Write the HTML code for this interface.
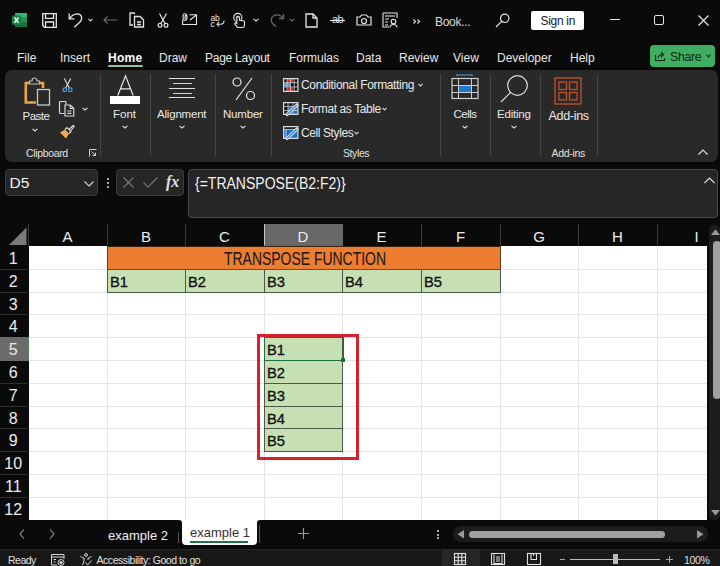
<!DOCTYPE html>
<html><head><meta charset="utf-8">
<style>
*{margin:0;padding:0;box-sizing:border-box}
html,body{width:720px;height:566px;overflow:hidden;background:#0a0a0a;font-family:"Liberation Sans",sans-serif;color:#fff}
.a{position:absolute}
.t{position:absolute;white-space:nowrap;line-height:1}
svg{position:absolute;overflow:visible}
</style></head><body>

<!-- excel logo -->
<svg style="left:12px;top:13px" width="15" height="14" viewBox="0 0 15 14">
  <rect x="3" y="0" width="12" height="14" rx="1" fill="#1d8f54"/>
  <rect x="3" y="0" width="12" height="4.5" rx="1" fill="#2fb874"/>
  <rect x="3" y="9.5" width="12" height="4.5" rx="1" fill="#17703f"/>
  <rect x="0" y="2.6" width="9" height="9.1" rx="0.8" fill="#138048"/>
  <path d="M2.5 4.5 L6.5 9.8 M6.5 4.5 L2.5 9.8" stroke="#f4fff8" stroke-width="1.5"/>
</svg>
<!-- save -->
<svg style="left:41.5px;top:13px" width="15" height="15" viewBox="0 0 15 15" fill="none" stroke="#e6e6e6" stroke-width="1.3">
  <path d="M0.7 0.7 H14.3 V14.3 H2.5 L0.7 12.5 Z"/><path d="M3.5 0.7 V5.3 H11.5 V0.7"/><path d="M3.5 14.3 V9 H11.5 V14.3"/>
</svg>
<!-- undo -->
<svg style="left:68px;top:13px" width="15" height="15" viewBox="0 0 15 15" fill="none" stroke="#e6e6e6" stroke-width="1.3">
  <path d="M1.2 0.5 V5.8 H6.5"/><path d="M1.5 5.5 Q5 1 9 0.8 Q13.5 0.8 13.7 5 Q13.7 7.5 11.5 9.5 L6.2 14.3"/>
</svg>
<svg style="left:88px;top:18px" width="5" height="4" viewBox="0 0 5 4" fill="none" stroke="#ddd" stroke-width="1.1"><path d="M0.5 0.8 L2.5 3 L4.5 0.8"/></svg>
<!-- back arrow gray -->
<svg style="left:103px;top:16px" width="14" height="8" viewBox="0 0 14 8" fill="none" stroke="#6a6a6a" stroke-width="1.2"><path d="M14 4 H1 M4.5 0.5 L1 4 L4.5 7.5"/></svg>
<!-- copy doc -->
<svg style="left:129px;top:12px" width="16" height="16" viewBox="0 0 16 16" fill="none" stroke="#e6e6e6" stroke-width="1.3">
  <path d="M6 2 L5 1 H1 V13 H4"/><path d="M5.5 4.5 H11 L14.5 8 V15 H5.5 Z"/><path d="M8 10 H12 M8 12.5 H12"/>
</svg>
<!-- scissors -->
<svg style="left:157px;top:13px" width="12" height="15" viewBox="0 0 12 15" fill="none" stroke="#e6e6e6" stroke-width="1.2">
  <path d="M2.5 0.5 L8 10.5 M9.5 0.5 L4 10.5"/><circle cx="3" cy="12.3" r="1.9"/><circle cx="9" cy="12.3" r="1.9"/>
</svg>
<!-- attach email -->
<svg style="left:182px;top:13px" width="16" height="13" viewBox="0 0 16 13" fill="none" stroke="#e6e6e6" stroke-width="1.1">
  <path d="M7.5 1.8 H14.5 V11.5 H0.6 V7"/><path d="M8 7 L14 2.3"/><path d="M4.7 6 V2.5 A1.8 1.8 0 0 0 1.1 2.5 V5.5 A1.9 1.9 0 0 0 4.9 5.5 V3.3 A0.9 0.9 0 0 0 3.1 3.3 V6"/>
</svg>
<!-- spell abc -->
<div class="t" style="left:210.5px;top:13.5px;font-size:8.5px;color:#e6e6e6;letter-spacing:-0.2px">ab</div>
<div class="t" style="left:210.5px;top:19.5px;font-size:8.5px;color:#e6e6e6">c</div>
<svg style="left:216px;top:19.5px" width="9" height="7" viewBox="0 0 9 7" fill="none" stroke="#e6e6e6" stroke-width="1.1"><path d="M8 0.5 Q8 4.3 4.5 4.3 H1 M3 2 L1 4.3 L3 6.5"/></svg>
<!-- touch -->
<svg style="left:233px;top:13px" width="13" height="16" viewBox="0 0 13 16" fill="none" stroke="#e6e6e6" stroke-width="1.1">
  <circle cx="4.8" cy="4.5" r="4.1"/><circle cx="4.8" cy="4.5" r="2.1" fill="#888" stroke="none"/>
  <path d="M3.8 5 V10.5 L2.5 9.8 Q1.5 10 2 11.2 L4.5 14.5 H10 Q11.5 14 11.5 12 V9 Q11.5 8 10 7.8 L6.5 7.2 V5 A1.35 1.35 0 0 0 3.8 5 Z" fill="#0a0a0a"/>
</svg>
<svg style="left:253px;top:18px" width="6" height="4" viewBox="0 0 6 4" fill="none" stroke="#ddd" stroke-width="1.1"><path d="M0.5 0.8 L3 3 L5.5 0.8"/></svg>
<!-- redo gray -->
<svg style="left:269px;top:13px" width="16" height="14" viewBox="0 0 16 14" fill="none" stroke="#6a6a6a" stroke-width="1.3">
  <path d="M14.5 1 V5.5 H10"/><path d="M14.2 5.3 C12 2 8 1 5 2.5 C1.5 4.5 1.5 8.5 4 11 L7 13.5"/>
</svg>
<svg style="left:289px;top:18px" width="6" height="4" viewBox="0 0 6 4" fill="none" stroke="#6a6a6a" stroke-width="1.1"><path d="M0.5 0.8 L3 3 L5.5 0.8"/></svg>
<!-- new doc -->
<svg style="left:305px;top:13px" width="13" height="15" viewBox="0 0 13 15" fill="none" stroke="#e6e6e6" stroke-width="1.3">
  <path d="M1 1 H8 L12 5 V14 H1 Z"/><path d="M8 1 V5 H12"/>
</svg>
<!-- strikethrough ab -->
<div class="t" style="left:332px;top:14px;font-size:11px;color:#e6e6e6;letter-spacing:-0.5px">ab</div>
<div class="a" style="left:330px;top:20px;width:15px;height:1.3px;background:#e6e6e6"></div>
<!-- camera -->
<svg style="left:356px;top:14px" width="16" height="12" viewBox="0 0 16 12" fill="none" stroke="#e6e6e6" stroke-width="1.2">
  <path d="M1 3 H4 L5.5 1 H10.5 L12 3 H15 V11 H1 Z"/><circle cx="8" cy="7" r="2.5"/>
</svg>
<!-- form -->
<svg style="left:382px;top:12px" width="17" height="16" viewBox="0 0 17 16" fill="none" stroke="#e6e6e6" stroke-width="1.1">
  <path d="M1 1 H15 V6"/><path d="M1 1 V15 H7"/><path d="M3 4 H13"/><path d="M3 7 H7 M3 10 H6 M3 13 H6"/><circle cx="11.5" cy="9.5" r="2.3"/><path d="M8 15.5 Q8 12.5 11.5 12.5 Q15 12.5 15 15.5"/>
</svg>
<svg style="left:413px;top:19px" width="8" height="5" viewBox="0 0 8 5" fill="none" stroke="#e0e0e0" stroke-width="1.2"><path d="M0.5 0.5 L2.5 2.5 L0.5 4.5 M4.5 0.5 L6.5 2.5 L4.5 4.5"/></svg>
<div class="t" style="left:435px;top:15.5px;font-size:12px;color:#dcdcdc;letter-spacing:-0.3px">Book...</div>
<!-- search -->
<svg style="left:495px;top:13px" width="15" height="15" viewBox="0 0 15 15" fill="none" stroke="#e6e6e6" stroke-width="1.2">
  <circle cx="9.7" cy="5.3" r="4.2"/><path d="M6.7 8.3 L1 14"/>
</svg>
<div class="a" style="left:531px;top:11px;width:53px;height:19px;background:#fff;border-radius:2px"></div>
<div class="t" style="left:540.5px;top:15px;font-size:12px;color:#1a1a1a;letter-spacing:-0.3px">Sign in</div>
<!-- window controls -->
<div class="a" style="left:610px;top:19px;width:10px;height:1.2px;background:#e6e6e6"></div>
<div class="a" style="left:654px;top:15px;width:10px;height:10px;border:1.2px solid #e6e6e6;border-radius:2px"></div>
<svg style="left:698px;top:15px" width="11" height="11" viewBox="0 0 11 11" fill="none" stroke="#e6e6e6" stroke-width="1.2"><path d="M0.5 0.5 L10.5 10.5 M10.5 0.5 L0.5 10.5"/></svg>

<div class="t" style="left:17px;top:52px;font-size:12px;color:#e8e8e8">File</div>
<div class="t" style="left:60px;top:52px;font-size:12px;color:#e8e8e8">Insert</div>
<div class="t" style="left:108px;top:52px;font-size:12px;color:#fff;font-weight:bold;letter-spacing:0.3px">Home</div>
<div class="a" style="left:108px;top:64.5px;width:35px;height:2px;background:#8fc3a4;border-radius:1px"></div>
<div class="t" style="left:159px;top:52px;font-size:12px;color:#e8e8e8">Draw</div>
<div class="t" style="left:205px;top:52px;font-size:12px;color:#e8e8e8;letter-spacing:-0.25px">Page Layout</div>
<div class="t" style="left:289px;top:52px;font-size:12px;color:#e8e8e8">Formulas</div>
<div class="t" style="left:356px;top:52px;font-size:12px;color:#e8e8e8">Data</div>
<div class="t" style="left:399px;top:52px;font-size:12px;color:#e8e8e8">Review</div>
<div class="t" style="left:453px;top:52px;font-size:12px;color:#e8e8e8">View</div>
<div class="t" style="left:497px;top:52px;font-size:12px;color:#e8e8e8">Developer</div>
<div class="t" style="left:570px;top:52px;font-size:12px;color:#e8e8e8">Help</div>
<div class="a" style="left:650px;top:45px;width:65px;height:22px;background:#3fae62;border-radius:4px"></div>
<svg style="left:655px;top:51px" width="11" height="10" viewBox="0 0 11 10" fill="none" stroke="#0f2a18" stroke-width="1.1">
  <path d="M0.5 4 V9.5 H9.5 V7"/><path d="M3 7 Q3.5 3.5 8 3.5 M6 1 L8.5 3.5 L6 6"/>
</svg>
<div class="t" style="left:670px;top:50.8px;font-size:12.3px;color:#0f2a18;letter-spacing:-0.3px">Share</div>
<svg style="left:706px;top:54px" width="5" height="3.5" viewBox="0 0 5 3.5" fill="none" stroke="#0f2a18" stroke-width="1.1"><path d="M0.5 0.5 L2.5 2.8 L4.5 0.5"/></svg>

<div class="a" style="left:5px;top:70px;width:713px;height:92px;background:#292929;border-radius:7px"></div>
<!-- separators -->
<div class="a" style="left:100px;top:74px;width:1px;height:82px;background:#454545"></div>
<div class="a" style="left:150px;top:74px;width:1px;height:82px;background:#454545"></div>
<div class="a" style="left:215px;top:74px;width:1px;height:82px;background:#454545"></div>
<div class="a" style="left:271px;top:74px;width:1px;height:82px;background:#454545"></div>
<div class="a" style="left:440px;top:74px;width:1px;height:82px;background:#454545"></div>
<div class="a" style="left:490px;top:74px;width:1px;height:82px;background:#454545"></div>
<div class="a" style="left:540px;top:74px;width:1px;height:82px;background:#454545"></div>
<div class="a" style="left:597px;top:74px;width:1px;height:82px;background:#454545"></div>

<!-- Clipboard group -->
<svg style="left:23px;top:76px" width="29" height="31" viewBox="0 0 29 31" fill="none">
  <path d="M6 7 H2.8 V26.5 H13" stroke="#eaa53c" stroke-width="2.6"/>
  <path d="M15 7 H20 V12" stroke="#eaa53c" stroke-width="2.6"/>
  <path d="M6.5 8 V5 H9 Q9 2 11.5 2 Q14 2 14 5 H16.5 V8 Z" stroke="#bdbdbd" stroke-width="1.2" fill="#292929"/>
  <rect x="14.5" y="13.5" width="12" height="15.5" stroke="#c8c8c8" stroke-width="1.3" fill="#292929"/>
</svg>
<div class="t" style="left:22.5px;top:111px;font-size:11.5px;color:#e8e8e8;letter-spacing:-0.5px">Paste</div>
<svg style="left:32px;top:128px" width="6" height="4" viewBox="0 0 6 4" fill="none" stroke="#ddd" stroke-width="1.1"><path d="M0.5 0.8 L3 3 L5.5 0.8"/></svg>
<!-- scissors blue -->
<svg style="left:61.5px;top:77.5px" width="11" height="14.5" viewBox="0 0 12 16" fill="none" stroke-width="1.3">
  <path d="M2.5 0.5 L8 11 M9.5 0.5 L4 11" stroke="#d8d8d8"/><circle cx="3" cy="13" r="2" stroke="#4a9ee0" stroke-width="1.4"/><circle cx="9" cy="13" r="2" stroke="#4a9ee0" stroke-width="1.4"/>
</svg>
<!-- copy -->
<svg style="left:58px;top:100px" width="17" height="17" viewBox="0 0 17 17" fill="none" stroke="#d8d8d8" stroke-width="1.2">
  <path d="M8 4.5 V2.5 Q8 1.5 7 1.5 H2.5 Q1.5 1.5 1.5 2.5 V12.5 Q1.5 13.5 2.5 13.5 H6.5"/><path d="M7 5 H12.3 L15.8 8.5 V16 H7 Z"/><path d="M12.3 5 V8.5 H15.8"/><path d="M9.3 11 H13.5 M9.3 13.3 H13.5"/>
</svg>
<svg style="left:82px;top:107px" width="6" height="4" viewBox="0 0 6 4" fill="none" stroke="#ddd" stroke-width="1.1"><path d="M0.5 0.8 L3 3 L5.5 0.8"/></svg>
<!-- format painter -->
<svg style="left:59px;top:124px" width="16" height="15" viewBox="0 0 16 15" fill="none">
  <path d="M1 8.5 L7 14.5 L10 9.5 L6 5.5 Z" fill="#e8b04a"/>
  <path d="M6 5.5 L8 3.5 L12 7.5 L10 9.5" stroke="#d8d8d8" stroke-width="1.2"/>
  <path d="M10 5.5 L14 1.5 A0.9 0.9 0 0 1 15 2.5 L12 6.5" stroke="#d8d8d8" stroke-width="1.2"/>
</svg>
<div class="t" style="left:26px;top:148px;font-size:10.5px;color:#e0e0e0;letter-spacing:-0.35px">Clipboard</div>
<svg style="left:89px;top:149px" width="8" height="8" viewBox="0 0 8 8" fill="none" stroke="#cfcfcf" stroke-width="1"><path d="M0.5 7.5 V0.5 H7.5 M2.5 2.5 L6.5 6.5 M6.5 3.5 V6.5 H3.5"/></svg>

<!-- Font group -->
<svg style="left:116.5px;top:75px" width="17" height="21" viewBox="0 0 17 21" fill="none" stroke="#e8e8e8" stroke-width="1.2"><path d="M0.8 20.5 L8.5 0.8 L16.2 20.5 M3.5 13.8 H13.5"/></svg>
<div class="a" style="left:110px;top:96px;width:30px;height:8px;background:#fff"></div>
<div class="t" style="left:113px;top:109px;font-size:11.5px;color:#e8e8e8">Font</div>
<svg style="left:122px;top:125px" width="6" height="4" viewBox="0 0 6 4" fill="none" stroke="#ddd" stroke-width="1.1"><path d="M0.5 0.8 L3 3 L5.5 0.8"/></svg>

<!-- Alignment -->
<div class="a" style="left:169px;top:78px;width:26px;height:1.3px;background:#e0e0e0"></div>
<div class="a" style="left:172.5px;top:83px;width:19px;height:1.3px;background:#d0d0d0"></div>
<div class="a" style="left:169px;top:88px;width:26px;height:1.3px;background:#e0e0e0"></div>
<div class="a" style="left:172.5px;top:93px;width:19px;height:1.3px;background:#d0d0d0"></div>
<div class="a" style="left:169px;top:97px;width:26px;height:1.3px;background:#e0e0e0"></div>
<div class="t" style="left:157px;top:109px;font-size:11.5px;color:#e8e8e8;letter-spacing:-0.2px">Alignment</div>
<svg style="left:179px;top:125px" width="6" height="4" viewBox="0 0 6 4" fill="none" stroke="#ddd" stroke-width="1.1"><path d="M0.5 0.8 L3 3 L5.5 0.8"/></svg>

<!-- Number -->
<svg style="left:232px;top:77px" width="24" height="24" viewBox="0 0 24 24" fill="none" stroke="#e8e8e8" stroke-width="1.2"><circle cx="5" cy="5" r="4"/><circle cx="18.5" cy="18.5" r="4"/><path d="M20 1 L4 23"/></svg>
<div class="t" style="left:223px;top:109px;font-size:11.5px;color:#e8e8e8;letter-spacing:-0.2px">Number</div>
<svg style="left:240px;top:125px" width="6" height="4" viewBox="0 0 6 4" fill="none" stroke="#ddd" stroke-width="1.1"><path d="M0.5 0.8 L3 3 L5.5 0.8"/></svg>

<!-- Styles group -->
<svg style="left:283px;top:77.5px" width="15.5" height="14" viewBox="0 0 15.5 14">
  <rect x="0.6" y="0.6" width="14.3" height="12.8" fill="#151515"/>
  <rect x="4" y="1" width="6" height="3.2" fill="#e52626"/>
  <rect x="1" y="5.2" width="6" height="3.4" fill="#5a9ee6"/>
  <rect x="4.5" y="9.6" width="5.5" height="3.4" fill="#e52626"/>
  <path d="M0.6 0.6 H14.9 V13.4 H0.6 Z" fill="none" stroke="#dcdcdc" stroke-width="1.2"/>
  <path d="M4 0.6 V13.4 M7.5 0.6 V13.4 M11.2 0.6 V13.4 M0.6 4.6 H14.9 M0.6 9 H14.9" stroke="#cfcfcf" stroke-width="0.8"/>
</svg>
<div class="t" style="left:301px;top:79px;font-size:12px;color:#e8e8e8;letter-spacing:-0.35px">Conditional Formatting</div>
<svg style="left:418px;top:83px" width="5" height="4" viewBox="0 0 5 4" fill="none" stroke="#ddd" stroke-width="1.1"><path d="M0.5 0.8 L2.5 3 L4.5 0.8"/></svg>
<svg style="left:283px;top:102px" width="15.5" height="13" viewBox="0 0 15.5 13">
  <rect x="0.6" y="0.6" width="14.3" height="11.8" fill="#151515"/>
  <rect x="5" y="4.6" width="9.9" height="7.8" fill="#1f6fc4"/>
  <path d="M0.6 0.6 H14.9 V12.4 H0.6 Z" fill="none" stroke="#dcdcdc" stroke-width="1.2"/>
  <path d="M5 0.6 V12.4 M10 0.6 V12.4 M0.6 4.4 H14.9 M0.6 8.4 H14.9" stroke="#cfcfcf" stroke-width="0.8"/>
  <path d="M4 12.5 L14 3" stroke="#dcdcdc" stroke-width="3.2" stroke-linecap="round"/>
  <path d="M4.3 12.2 L13.7 3.3" stroke="#3d8ee0" stroke-width="1.4"/>
</svg>
<div class="t" style="left:301px;top:103px;font-size:12px;color:#e8e8e8;letter-spacing:-0.4px">Format as Table</div>
<svg style="left:381.5px;top:107px" width="5" height="4" viewBox="0 0 5 4" fill="none" stroke="#ddd" stroke-width="1.1"><path d="M0.5 0.8 L2.5 3 L4.5 0.8"/></svg>
<svg style="left:283px;top:126px" width="15.5" height="13" viewBox="0 0 15.5 13">
  <rect x="0.6" y="0.6" width="14.3" height="11.8" fill="#1f6fc4"/>
  <rect x="0.6" y="0.6" width="14.3" height="2.8" fill="#151515"/>
  <path d="M0.6 0.6 H14.9 V12.4 H0.6 Z" fill="none" stroke="#dcdcdc" stroke-width="1.2"/>
  <path d="M0.6 3.4 H14.9 M3 3.4 V12.4" stroke="#cfcfcf" stroke-width="0.9"/>
  <path d="M4 12.5 L14 3" stroke="#dcdcdc" stroke-width="3.2" stroke-linecap="round"/>
  <path d="M4.3 12.2 L13.7 3.3" stroke="#3d8ee0" stroke-width="1.4"/>
</svg>
<div class="t" style="left:301px;top:127px;font-size:12px;color:#e8e8e8;letter-spacing:-0.4px">Cell Styles</div>
<svg style="left:353.5px;top:131px" width="5" height="4" viewBox="0 0 5 4" fill="none" stroke="#ddd" stroke-width="1.1"><path d="M0.5 0.8 L2.5 3 L4.5 0.8"/></svg>
<div class="t" style="left:343px;top:148px;font-size:10.5px;color:#e0e0e0;letter-spacing:-0.4px">Styles</div>

<!-- Cells -->
<svg style="left:451px;top:74px" width="28" height="26" viewBox="0 0 28 26">
  <path d="M6 1 H21 M6 0 V2 M21 0 V2" stroke="#4a9ee0" stroke-width="1.2"/>
  <rect x="7.5" y="12" width="13" height="6.5" fill="#1e78d0"/>
  <rect x="1" y="4.5" width="26" height="20" fill="none" stroke="#cfcfcf" stroke-width="1.2"/>
  <path d="M1 11.5 H27 M1 18.5 H27 M7.5 4.5 V24.5 M20.5 4.5 V24.5" stroke="#cfcfcf" stroke-width="1"/>
</svg>
<div class="t" style="left:453.5px;top:109px;font-size:11.5px;color:#e8e8e8;letter-spacing:-0.5px">Cells</div>
<svg style="left:462px;top:125px" width="6" height="4" viewBox="0 0 6 4" fill="none" stroke="#ddd" stroke-width="1.1"><path d="M0.5 0.8 L3 3 L5.5 0.8"/></svg>

<!-- Editing -->
<svg style="left:500px;top:74px" width="30" height="30" viewBox="0 0 30 30" fill="none" stroke="#e0e0e0" stroke-width="1.2">
  <circle cx="17.5" cy="11.5" r="9.8"/><path d="M10.5 18.5 L1 28"/>
</svg>
<div class="t" style="left:497px;top:109px;font-size:11.5px;color:#e8e8e8;letter-spacing:-0.2px">Editing</div>
<svg style="left:511px;top:125px" width="6" height="4" viewBox="0 0 6 4" fill="none" stroke="#ddd" stroke-width="1.1"><path d="M0.5 0.8 L3 3 L5.5 0.8"/></svg>

<!-- Add-ins -->
<svg style="left:554px;top:77px" width="28" height="28" viewBox="0 0 28 28" fill="none" stroke="#c8502a" stroke-width="1.3">
  <rect x="1" y="1" width="26" height="26"/><rect x="5" y="5" width="7.5" height="7.5"/><rect x="15.5" y="5" width="7.5" height="7.5"/><rect x="5" y="15.5" width="7.5" height="7.5"/><rect x="15.5" y="15.5" width="7.5" height="7.5"/>
</svg>
<div class="t" style="left:548.5px;top:110px;font-size:12.5px;color:#e8e8e8;letter-spacing:-0.3px">Add-ins</div>
<div class="t" style="left:551.5px;top:148px;font-size:10.5px;color:#e0e0e0;letter-spacing:-0.3px">Add-ins</div>
<!-- collapse chevron -->
<svg style="left:697.5px;top:149px" width="10" height="6" viewBox="0 0 10 6" fill="none" stroke="#ddd" stroke-width="1.2"><path d="M0.5 5.5 L5 1 L9.5 5.5"/></svg>

<div class="a" style="left:5px;top:169px;width:93px;height:27px;background:#262626;border:1px solid #3c3c3c;border-radius:4px"></div>
<div class="t" style="left:9.5px;top:175px;font-size:15.5px;color:#f0f0f0">D5</div>
<svg style="left:84px;top:180.5px" width="10" height="6" viewBox="0 0 10 6" fill="none" stroke="#d0d0d0" stroke-width="1.2"><path d="M0.5 0.5 L5 5 L9.5 0.5"/></svg>
<div class="a" style="left:106.5px;top:177.5px;width:2px;height:2px;background:#ddd;border-radius:1px"></div>
<div class="a" style="left:106.5px;top:181.5px;width:2px;height:2px;background:#ddd;border-radius:1px"></div>
<div class="a" style="left:106.5px;top:185.5px;width:2px;height:2px;background:#ddd;border-radius:1px"></div>
<div class="a" style="left:116px;top:169px;width:68px;height:27px;background:#262626;border:1px solid #3c3c3c;border-radius:4px"></div>
<svg style="left:122.5px;top:177px" width="11" height="11" viewBox="0 0 11 11" fill="none" stroke="#777" stroke-width="1.1"><path d="M0.5 0.5 L10.5 10.5 M10.5 0.5 L0.5 10.5"/></svg>
<svg style="left:143px;top:177px" width="15" height="11" viewBox="0 0 15 11" fill="none" stroke="#777" stroke-width="1.1"><path d="M0.5 5.5 L5 10 L14.5 0.5"/></svg>
<div class="t" style="left:166px;top:173.5px;font-size:16px;color:#e0e0e0;font-family:'Liberation Serif',serif;font-style:italic;font-weight:bold">fx</div>
<div class="a" style="left:188px;top:169px;width:530px;height:49px;background:#262626;border:1px solid #4a4a4a;border-radius:4px"></div>
<div class="t" style="left:194.5px;top:174.5px;font-size:16.3px;color:#f0f0f0;transform:scaleX(0.86);transform-origin:0 0">{=TRANSPOSE(B2:F2)}</div>
<svg style="left:704px;top:177px" width="11" height="7" viewBox="0 0 11 7" fill="none" stroke="#ddd" stroke-width="1.2"><path d="M0.5 6 L5.5 1 L10.5 6"/></svg>

<div class="a" style="left:29px;top:246px;width:678px;height:274px;background:#fff"></div>
<div class="a" style="left:107px;top:246px;width:1px;height:274px;background:#e4e4e4"></div>
<div class="a" style="left:185px;top:246px;width:1px;height:274px;background:#e4e4e4"></div>
<div class="a" style="left:264px;top:246px;width:1px;height:274px;background:#e4e4e4"></div>
<div class="a" style="left:342px;top:246px;width:1px;height:274px;background:#e4e4e4"></div>
<div class="a" style="left:421px;top:246px;width:1px;height:274px;background:#e4e4e4"></div>
<div class="a" style="left:500px;top:246px;width:1px;height:274px;background:#e4e4e4"></div>
<div class="a" style="left:578px;top:246px;width:1px;height:274px;background:#e4e4e4"></div>
<div class="a" style="left:657px;top:246px;width:1px;height:274px;background:#e4e4e4"></div>
<div class="a" style="left:29px;top:269px;width:678px;height:1px;background:#e4e4e4"></div>
<div class="a" style="left:29px;top:292px;width:678px;height:1px;background:#e4e4e4"></div>
<div class="a" style="left:29px;top:314px;width:678px;height:1px;background:#e4e4e4"></div>
<div class="a" style="left:29px;top:337px;width:678px;height:1px;background:#e4e4e4"></div>
<div class="a" style="left:29px;top:360px;width:678px;height:1px;background:#e4e4e4"></div>
<div class="a" style="left:29px;top:383px;width:678px;height:1px;background:#e4e4e4"></div>
<div class="a" style="left:29px;top:406px;width:678px;height:1px;background:#e4e4e4"></div>
<div class="a" style="left:29px;top:428px;width:678px;height:1px;background:#e4e4e4"></div>
<div class="a" style="left:29px;top:451px;width:678px;height:1px;background:#e4e4e4"></div>
<div class="a" style="left:29px;top:474px;width:678px;height:1px;background:#e4e4e4"></div>
<div class="a" style="left:29px;top:497px;width:678px;height:1px;background:#e4e4e4"></div>
<div class="a" style="left:107px;top:224px;width:1px;height:22px;background:#3a3a3a"></div>
<div class="a" style="left:185px;top:224px;width:1px;height:22px;background:#3a3a3a"></div>
<div class="a" style="left:264px;top:224px;width:1px;height:22px;background:#3a3a3a"></div>
<div class="a" style="left:342px;top:224px;width:1px;height:22px;background:#3a3a3a"></div>
<div class="a" style="left:421px;top:224px;width:1px;height:22px;background:#3a3a3a"></div>
<div class="a" style="left:500px;top:224px;width:1px;height:22px;background:#3a3a3a"></div>
<div class="a" style="left:578px;top:224px;width:1px;height:22px;background:#3a3a3a"></div>
<div class="a" style="left:657px;top:224px;width:1px;height:22px;background:#3a3a3a"></div>
<div class="a" style="left:28px;top:224px;width:1px;height:22px;background:#3a3a3a"></div>
<div class="a" style="left:264px;top:224px;width:79px;height:22px;background:#686868;border-left:1px solid #c8c8c8;border-bottom:1.5px solid #4f7050"></div>
<div class="t" style="left:28px;top:229px;width:79px;text-align:center;font-size:15px;color:#ececec">A</div>
<div class="t" style="left:107px;top:229px;width:78px;text-align:center;font-size:15px;color:#ececec">B</div>
<div class="t" style="left:185px;top:229px;width:79px;text-align:center;font-size:15px;color:#ececec">C</div>
<div class="t" style="left:264px;top:229px;width:78px;text-align:center;font-size:15px;color:#ececec">D</div>
<div class="t" style="left:342px;top:229px;width:79px;text-align:center;font-size:15px;color:#ececec">E</div>
<div class="t" style="left:421px;top:229px;width:79px;text-align:center;font-size:15px;color:#ececec">F</div>
<div class="t" style="left:500px;top:229px;width:78px;text-align:center;font-size:15px;color:#ececec">G</div>
<div class="t" style="left:578px;top:229px;width:79px;text-align:center;font-size:15px;color:#ececec">H</div>
<div class="t" style="left:657px;top:229px;width:79px;text-align:center;font-size:15px;color:#ececec">I</div>
<svg style="left:0;top:224px" width="28" height="22"><path d="M9 21 L26.5 21 L26.5 3.5 Z" fill="#7a7a7a"/></svg>
<div class="a" style="left:0;top:269px;width:28px;height:1px;background:#2e2e2e"></div>
<div class="a" style="left:0;top:292px;width:28px;height:1px;background:#2e2e2e"></div>
<div class="a" style="left:0;top:314px;width:28px;height:1px;background:#2e2e2e"></div>
<div class="a" style="left:0;top:337px;width:28px;height:1px;background:#2e2e2e"></div>
<div class="a" style="left:0;top:360px;width:28px;height:1px;background:#2e2e2e"></div>
<div class="a" style="left:0;top:383px;width:28px;height:1px;background:#2e2e2e"></div>
<div class="a" style="left:0;top:406px;width:28px;height:1px;background:#2e2e2e"></div>
<div class="a" style="left:0;top:428px;width:28px;height:1px;background:#2e2e2e"></div>
<div class="a" style="left:0;top:451px;width:28px;height:1px;background:#2e2e2e"></div>
<div class="a" style="left:0;top:474px;width:28px;height:1px;background:#2e2e2e"></div>
<div class="a" style="left:0;top:497px;width:28px;height:1px;background:#2e2e2e"></div>
<div class="a" style="left:0;top:337px;width:28px;height:23.5px;background:#6b6b6b"></div>
<div class="a" style="left:27.2px;top:337px;width:1.6px;height:23.5px;background:#4f7f5f"></div>
<div class="t" style="left:0;top:251px;width:26.5px;text-align:center;font-size:16px;color:#ececec">1</div>
<div class="t" style="left:0;top:274px;width:26.5px;text-align:center;font-size:16px;color:#ececec">2</div>
<div class="t" style="left:0;top:297px;width:26.5px;text-align:center;font-size:16px;color:#ececec">3</div>
<div class="t" style="left:0;top:319px;width:26.5px;text-align:center;font-size:16px;color:#ececec">4</div>
<div class="t" style="left:0;top:342px;width:26.5px;text-align:center;font-size:16px;color:#ececec">5</div>
<div class="t" style="left:0;top:365px;width:26.5px;text-align:center;font-size:16px;color:#ececec">6</div>
<div class="t" style="left:0;top:388px;width:26.5px;text-align:center;font-size:16px;color:#ececec">7</div>
<div class="t" style="left:0;top:411px;width:26.5px;text-align:center;font-size:16px;color:#ececec">8</div>
<div class="t" style="left:0;top:433px;width:26.5px;text-align:center;font-size:16px;color:#ececec">9</div>
<div class="t" style="left:0;top:456px;width:26.5px;text-align:center;font-size:16px;color:#ececec">10</div>
<div class="t" style="left:0;top:479px;width:26.5px;text-align:center;font-size:16px;color:#ececec">11</div>
<div class="t" style="left:0;top:502px;width:26.5px;text-align:center;font-size:16px;color:#ececec">12</div>
<div class="a" style="left:107px;top:246px;width:394px;height:24px;background:#ed7d31;border:1px solid #5e3a1c;border-top-color:#3a2410"></div>
<div class="t" style="left:224px;top:250px;font-size:18px;color:#1a1a1a;-webkit-text-stroke:0.1px #1a1a1a;transform:scaleX(0.775);transform-origin:0 0">TRANSPOSE FUNCTION</div>
<div class="a" style="left:107px;top:269px;width:79px;height:24px;background:#c6e0b4;border:1px solid #4a5a48"></div>
<div class="t" style="left:110px;top:274.3px;font-size:15.5px;color:#111;-webkit-text-stroke:0.35px #111;transform:scaleX(0.95);transform-origin:0 0">B1</div>
<div class="a" style="left:185px;top:269px;width:80px;height:24px;background:#c6e0b4;border:1px solid #4a5a48"></div>
<div class="t" style="left:188px;top:274.3px;font-size:15.5px;color:#111;-webkit-text-stroke:0.35px #111;transform:scaleX(0.95);transform-origin:0 0">B2</div>
<div class="a" style="left:264px;top:269px;width:79px;height:24px;background:#c6e0b4;border:1px solid #4a5a48"></div>
<div class="t" style="left:267px;top:274.3px;font-size:15.5px;color:#111;-webkit-text-stroke:0.35px #111;transform:scaleX(0.95);transform-origin:0 0">B3</div>
<div class="a" style="left:342px;top:269px;width:80px;height:24px;background:#c6e0b4;border:1px solid #4a5a48"></div>
<div class="t" style="left:345px;top:274.3px;font-size:15.5px;color:#111;-webkit-text-stroke:0.35px #111;transform:scaleX(0.95);transform-origin:0 0">B4</div>
<div class="a" style="left:421px;top:269px;width:80px;height:24px;background:#c6e0b4;border:1px solid #4a5a48"></div>
<div class="t" style="left:424px;top:274.3px;font-size:15.5px;color:#111;-webkit-text-stroke:0.35px #111;transform:scaleX(0.95);transform-origin:0 0">B5</div>
<div class="a" style="left:264px;top:337px;width:79px;height:24px;background:#c6e0b4;border:1px solid #4a5a48"></div>
<div class="t" style="left:267px;top:341.8px;font-size:15.5px;color:#111;-webkit-text-stroke:0.35px #111;transform:scaleX(0.95);transform-origin:0 0">B1</div>
<div class="a" style="left:264px;top:360px;width:79px;height:24px;background:#c6e0b4;border:1px solid #4a5a48"></div>
<div class="t" style="left:267px;top:364.8px;font-size:15.5px;color:#111;-webkit-text-stroke:0.35px #111;transform:scaleX(0.95);transform-origin:0 0">B2</div>
<div class="a" style="left:264px;top:383px;width:79px;height:24px;background:#c6e0b4;border:1px solid #4a5a48"></div>
<div class="t" style="left:267px;top:387.8px;font-size:15.5px;color:#111;-webkit-text-stroke:0.35px #111;transform:scaleX(0.95);transform-origin:0 0">B3</div>
<div class="a" style="left:264px;top:406px;width:79px;height:23px;background:#c6e0b4;border:1px solid #4a5a48"></div>
<div class="t" style="left:267px;top:410.8px;font-size:15.5px;color:#111;-webkit-text-stroke:0.35px #111;transform:scaleX(0.95);transform-origin:0 0">B4</div>
<div class="a" style="left:264px;top:428px;width:79px;height:24px;background:#c6e0b4;border:1px solid #4a5a48"></div>
<div class="t" style="left:267px;top:432.8px;font-size:15.5px;color:#111;-webkit-text-stroke:0.35px #111;transform:scaleX(0.95);transform-origin:0 0">B5</div>
<div class="a" style="left:263.5px;top:337px;width:80px;height:24px;border:1.5px solid #1f6e43"></div>
<div class="a" style="left:340.5px;top:357.5px;width:4.5px;height:4.5px;background:#1e6b40"></div>
<div class="a" style="left:257px;top:334px;width:102px;height:126px;border:3px solid #d4212b"></div>
<!-- vertical scrollbar -->
<div class="a" style="left:709px;top:225px;width:11px;height:295px;background:#1c1c1c;border-radius:5px"></div>
<svg style="left:711px;top:229px" width="9" height="6" viewBox="0 0 9 6"><path d="M0 6 L4.5 0.5 L9 6 Z" fill="#9a9a9a"/></svg>
<div class="a" style="left:712.5px;top:240.5px;width:8px;height:158px;background:#a0a0a0;border-radius:4px"></div>
<svg style="left:711px;top:510px" width="9" height="6" viewBox="0 0 9 6"><path d="M0 0 L4.5 5.5 L9 0 Z" fill="#9a9a9a"/></svg>
<!-- tab bar -->
<div class="a" style="left:0;top:520px;width:720px;height:29px;background:#0a0a0a"></div>
<svg style="left:19px;top:529px" width="6" height="10" viewBox="0 0 6 10" fill="none" stroke="#9a9a9a" stroke-width="1.1"><path d="M5 0.5 L1 5 L5 9.5"/></svg>
<svg style="left:48.5px;top:529px" width="6" height="10" viewBox="0 0 6 10" fill="none" stroke="#9a9a9a" stroke-width="1.1"><path d="M1 0.5 L5 5 L1 9.5"/></svg>
<div class="t" style="left:108px;top:529px;font-size:13px;color:#f0f0f0">example 2</div>
<div class="a" style="left:178px;top:525px;width:1px;height:17.5px;background:#555"></div>
<!-- active tab -->
<div class="a" style="left:176px;top:520px;width:86px;height:6px;background:#fff"></div>
<div class="a" style="left:170px;top:520px;width:12px;height:12px;background:#0a0a0a;border-radius:0 3px 0 0"></div>
<div class="a" style="left:257px;top:520px;width:12px;height:12px;background:#0a0a0a;border-radius:3px 0 0 0"></div>
<div class="a" style="left:182px;top:520px;width:75px;height:25px;background:#fff;border-radius:0 0 4px 4px"></div>
<div class="t" style="left:190px;top:526px;font-size:13px;color:#333">example 1</div>
<div class="a" style="left:190px;top:540.5px;width:58px;height:2px;background:#217346"></div>
<div class="a" style="left:259px;top:525px;width:1px;height:17.5px;background:#555"></div>
<svg style="left:298px;top:528px" width="11" height="11" viewBox="0 0 11 11" fill="none" stroke="#9a9a9a" stroke-width="1.1"><path d="M5.5 0 V11 M0 5.5 H11"/></svg>
<!-- h scroll -->
<div class="a" style="left:436.5px;top:530px;width:2.4px;height:2.4px;background:#ddd;border-radius:1px"></div>
<div class="a" style="left:436.5px;top:533.5px;width:2.4px;height:2.4px;background:#ddd;border-radius:1px"></div>
<div class="a" style="left:436.5px;top:537px;width:2.4px;height:2.4px;background:#ddd;border-radius:1px"></div>
<div class="a" style="left:453px;top:526px;width:255px;height:16px;background:#1c1c1c;border-radius:8px"></div>
<svg style="left:456.5px;top:529.5px" width="7" height="8.5" viewBox="0 0 7 8.5"><path d="M7 0 L0.5 4.25 L7 8.5 Z" fill="#9a9a9a"/></svg>
<div class="a" style="left:468.5px;top:531px;width:196px;height:6.5px;background:#a0a0a0;border-radius:3.5px"></div>
<svg style="left:697px;top:529.5px" width="7" height="8.5" viewBox="0 0 7 8.5"><path d="M0 0 L6.5 4.25 L0 8.5 Z" fill="#9a9a9a"/></svg>
<!-- status bar -->
<div class="a" style="left:0;top:549px;width:720px;height:17px;background:#181818"></div>
<div class="a" style="left:0;top:549px;width:720px;height:1px;background:#262626"></div>
<div class="t" style="left:8px;top:554.5px;font-size:10.5px;color:#e0e0e0;letter-spacing:-0.5px">Ready</div>
<svg style="left:50.5px;top:554px" width="14" height="12" viewBox="0 0 14 12" fill="none" stroke="#d8d8d8" stroke-width="1">
  <path d="M0.5 0.5 H13 V5 M0.5 0.5 V11 H6 M0.5 3 H13"/><path d="M2.5 5.5 H5 M2.5 8 H4.5"/><circle cx="10" cy="8.5" r="3" fill="#181818"/><circle cx="10" cy="8.5" r="1.6" fill="#d8d8d8" stroke="none"/>
</svg>
<svg style="left:79.5px;top:552.5px" width="12" height="13" viewBox="0 0 12 13" fill="none" stroke="#d8d8d8" stroke-width="1">
  <circle cx="6" cy="2" r="1.4"/><path d="M0.5 3 Q2 5.5 4 5 V8 L2.5 12 M11.5 3 Q10 5.5 8 5 V7"/><path d="M5.5 9.5 L7.5 12 L11.5 7.5"/>
</svg>
<div class="t" style="left:96.5px;top:554.5px;font-size:10.5px;color:#e0e0e0;letter-spacing:-0.45px">Accessibility: Good to go</div>
<div class="a" style="left:441.5px;top:550px;width:38px;height:16px;background:#262626"></div>
<svg style="left:454px;top:552.5px" width="12" height="12" viewBox="0 0 12 12" fill="none" stroke="#e0e0e0" stroke-width="1.1"><rect x="0.5" y="0.5" width="11" height="11"/><path d="M4.2 0.5 V11.5 M7.8 0.5 V11.5 M0.5 4.2 H11.5 M0.5 7.8 H11.5"/></svg>
<svg style="left:490.5px;top:552.5px" width="14" height="12" viewBox="0 0 14 12" fill="none" stroke="#e0e0e0" stroke-width="1.1"><rect x="0.5" y="0.5" width="13" height="11"/><path d="M3 1.5 V10.5 H11 V1.5"/><path d="M5 4 H9 M5 6 H9 M5 8 H9"/></svg>
<svg style="left:527px;top:552.5px" width="14" height="12" viewBox="0 0 14 12" fill="none" stroke="#e0e0e0" stroke-width="1.1"><rect x="0.5" y="0.5" width="13" height="11"/><path d="M4 0.5 V6.5 H9.5 V0.5 M6.7 0.5 V3"/></svg>
<div class="a" style="left:560px;top:558.5px;width:4.5px;height:1px;background:#aaa"></div>
<div class="a" style="left:570px;top:559px;width:90px;height:1px;background:#bbb"></div>
<div class="a" style="left:613px;top:554px;width:5px;height:10px;background:#bbb"></div>
<svg style="left:665.5px;top:556px" width="7" height="7" viewBox="0 0 7 7" fill="none" stroke="#aaa" stroke-width="1"><path d="M3.5 0 V7 M0 3.5 H7"/></svg>
<div class="t" style="left:684px;top:554.5px;font-size:10.5px;color:#e0e0e0;letter-spacing:-0.3px">100%</div>

</body></html>
